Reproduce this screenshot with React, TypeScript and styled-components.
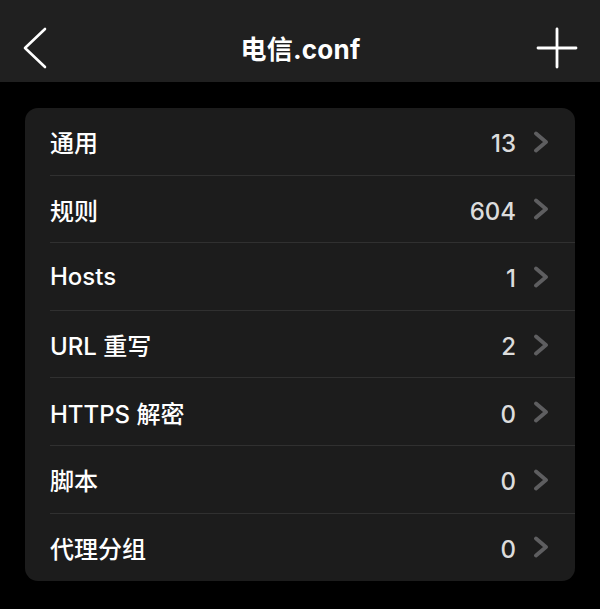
import * as React from 'react';
import styled, { createGlobalStyle } from 'styled-components';

const GlobalStyle = createGlobalStyle`
  html, body {
    margin: 0;
    padding: 0;
    background: #000;
  }
  body {
    font-family: Inter, "Noto Sans CJK SC", sans-serif;
    -webkit-font-smoothing: antialiased;
  }
`;

interface Item {
  label: string;
  count: number;
}

const items: Item[] = [
  { label: '通用', count: 13 },
  { label: '规则', count: 604 },
  { label: 'Hosts', count: 1 },
  { label: 'URL 重写', count: 2 },
  { label: 'HTTPS 解密', count: 0 },
  { label: '脚本', count: 0 },
  { label: '代理分组', count: 0 },
];

const Page = styled.div`
  width: 600px;
  min-height: 609px;
  background: #000;
`;

const NavBar = styled.header`
  height: 82px;
  background: #202020;
  display: flex;
  align-items: center;
  justify-content: space-between;
  padding: 13px 22px 0 23px;
  box-sizing: border-box;
`;

const NavButton = styled.button<{ $align?: string }>`
  width: 42px;
  height: 42px;
  padding: 0;
  border: none;
  background: none;
  display: flex;
  align-items: center;
  justify-content: ${(p) => p.$align || 'center'};
`;

const Title = styled.h1`
  margin: 0;
  color: #fff;
  font-size: 26px;
  font-weight: 700;
  letter-spacing: 0.2px;
`;

const Content = styled.main`
  padding: 26px 25px 28px;
`;

const Card = styled.div`
  background: #1c1c1c;
  border-radius: 13px;
  overflow: hidden;
`;

const Row = styled.div<{ $last?: boolean }>`
  height: 67.6px;
  display: flex;
  align-items: center;
  padding: 0 26px 0 25px;
  box-sizing: border-box;
  position: relative;

  &::after {
    content: '';
    display: ${(p) => (p.$last ? 'none' : 'block')};
    position: absolute;
    left: 25px;
    right: 0;
    bottom: 0;
    height: 1px;
    background: #303030;
  }
`;

const Label = styled.span`
  flex: 1;
  color: #fff;
  font-size: 24px;
  font-weight: 500;
`;

const Count = styled.span`
  color: #dcdcdc;
  font-size: 24px;
  font-weight: 500;
  padding-top: 4px;
  margin-right: 17px;
`;

const Chevron = () => (
  <svg width="16" height="22" viewBox="0 0 16 22">
    <polyline
      points="3,2.5 13,11 3,19.5"
      fill="none"
      stroke="#5e5e60"
      strokeWidth="3.8"
      strokeLinecap="round"
      strokeLinejoin="round"
    />
  </svg>
);

const BackIcon = () => (
  <svg width="24" height="42" viewBox="0 0 24 42">
    <polyline
      points="22,2 2,21 22,40"
      fill="none"
      stroke="#fff"
      strokeWidth="2.6"
      strokeLinecap="round"
      strokeLinejoin="round"
    />
  </svg>
);

const PlusIcon = () => (
  <svg width="42" height="42" viewBox="0 0 42 42">
    <path d="M21 2 V40 M2 21 H40" stroke="#fff" strokeWidth="2.8" strokeLinecap="round" />
  </svg>
);

export default function App() {
  return (
    <Page>
      <GlobalStyle />
      <NavBar>
        <NavButton aria-label="返回" $align="flex-start">
          <BackIcon />
        </NavButton>
        <Title>电信.conf</Title>
        <NavButton aria-label="添加">
          <PlusIcon />
        </NavButton>
      </NavBar>
      <Content>
        <Card>
          {items.map((item, i) => (
            <Row key={item.label} $last={i === items.length - 1}>
              <Label>{item.label}</Label>
              <Count>{item.count}</Count>
              <Chevron />
            </Row>
          ))}
        </Card>
      </Content>
    </Page>
  );
}
